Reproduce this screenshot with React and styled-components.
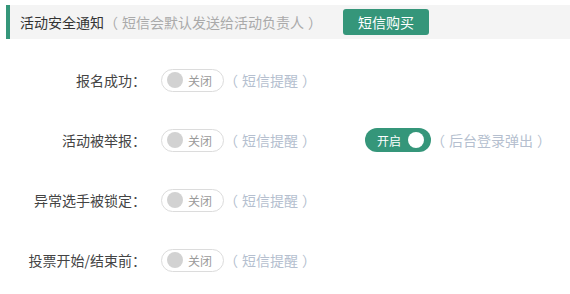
import React from 'react';
import styled, { createGlobalStyle } from 'styled-components';

const GlobalStyle = createGlobalStyle`
	html, body {
		margin: 0;
		padding: 0;
		background: #fff;
		font-family: "Noto Sans CJK SC", "Liberation Sans", sans-serif;
	}
`;

const Page = styled.div`
	padding: 5px 0 0 6px;
	width: 564px;
`;

const HeaderBar = styled.div`
	display: flex;
	align-items: center;
	height: 34px;
	background-color: #f4f4f4;
	border-left: 4px solid #35967a;
	padding-left: 10px;
	font-size: 14px;

	.title {
		color: #333;
	}
	.note {
		color: #aaa;
	}
`;

const Paren = styled.span`
	margin: ${p => (p.$close ? '0 0 0 4px' : '0 4px 0 0')};
`;

const BuyButton = styled.button`
	margin-left: 21px;
	width: 86px;
	height: 26px;
	border: none;
	border-radius: 3px;
	background-color: #35967a;
	color: #fff;
	font-family: inherit;
	font-size: 14px;
	padding: 0;
	cursor: pointer;
`;

const List = styled.div`
	margin-top: 11px;
`;

const Row = styled.div`
	display: flex;
	align-items: center;
	height: 60px;
`;

const Label = styled.div`
	width: 140px;
	text-align: right;
	font-size: 14px;
	color: #444;
	white-space: nowrap;
`;

const Switch = styled.div`
	box-sizing: border-box;
	display: flex;
	align-items: center;
	flex-direction: ${p => (p.$on ? 'row-reverse' : 'row')};
	justify-content: ${p => (p.$on ? 'space-between' : 'flex-start')};
	width: ${p => (p.$on ? '66px' : '63px')};
	height: ${p => (p.$on ? '24px' : '23px')};
	margin-left: ${p => p.$gap || 15}px;
	padding: ${p => (p.$on ? '0 7px 0 12px' : '0 0 0 5px')};
	border-radius: 12px;
	border: ${p => (p.$on ? 'none' : '1px solid #dcdcdc')};
	background-color: ${p => (p.$on ? '#35967a' : '#fff')};
	font-size: 12px;
	color: ${p => (p.$on ? '#fff' : '#9a9a9a')};
	cursor: pointer;
`;

const Knob = styled.span`
	width: 16px;
	height: 16px;
	border-radius: 50%;
	background-color: ${p => (p.$on ? '#fff' : '#d2d2d2')};
	margin-right: ${p => (p.$on ? '0' : '5px')};
`;

const Hint = styled.span`
	margin-left: 0;
	font-size: 14px;
	color: #b5bfcf;
	white-space: nowrap;
`;

const Bracketed = ({ children }) => (
	<>
		<Paren>（</Paren>
		{children}
		<Paren $close>）</Paren>
	</>
);

const Toggle = ({ on, gap }) => (
	<Switch $on={on} $gap={gap}>
		<Knob $on={on} />
		<span>{on ? '开启' : '关闭'}</span>
	</Switch>
);

const rows = [
	{ label: '报名成功：' },
	{ label: '活动被举报：', extra: true },
	{ label: '异常选手被锁定：' },
	{ label: '投票开始/结束前：' },
];

const App = () => {
	return (
		<Page>
			<GlobalStyle />
			<HeaderBar>
				<span className="title">活动安全通知</span>
				<span className="note">
					<Bracketed>短信会默认发送给活动负责人</Bracketed>
				</span>
				<BuyButton>短信购买</BuyButton>
			</HeaderBar>
			<List>
				{rows.map(row => (
					<Row key={row.label}>
						<Label>{row.label}</Label>
						<Toggle on={false} />
						<Hint>
							<Bracketed>短信提醒</Bracketed>
						</Hint>
						{row.extra && (
							<>
								<Toggle on gap={49} />
								<Hint>
									<Bracketed>后台登录弹出</Bracketed>
								</Hint>
							</>
						)}
					</Row>
				))}
			</List>
		</Page>
	);
};

export default App;
